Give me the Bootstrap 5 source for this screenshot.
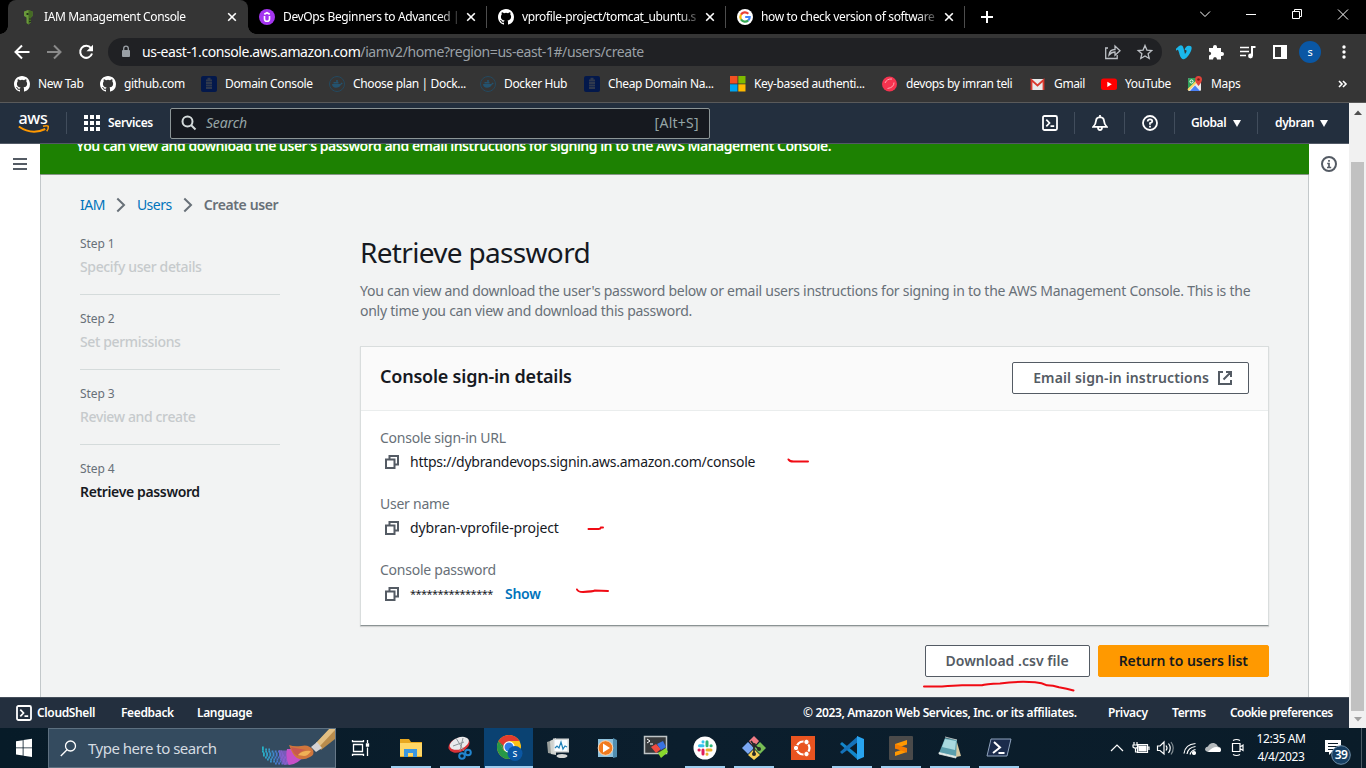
<!DOCTYPE html>
<html lang="en">
<head>
<meta charset="utf-8">
<title>IAM Management Console</title>
<link href="https://cdn.jsdelivr.net/npm/bootstrap@5.3.0/dist/css/bootstrap.min.css" rel="stylesheet">
<style>
body{width:1366px;height:768px;overflow:hidden;font-family:"Noto Sans","Open Sans",sans-serif;font-size:14px;line-height:20px;color:#16191f;background:#000}
svg{display:block;flex:none}
a{text-decoration:none}
.w6{font-weight:600}
/* browser chrome */
.chrome-ui{font-size:12px;letter-spacing:-.36px;color:#fff;line-height:16px;height:102px;background:#353535}
.tabstrip{height:34px;background:#000;padding-left:8px}
.btab{height:34px;position:relative}
.btab.cur{width:240px;background:#353535;border-radius:8px 8px 0 0;padding:0 11px 0 12px}
.btab.cur::before,.btab.cur::after{content:"";position:absolute;bottom:0;width:8px;height:8px}
.btab.cur::before{left:-8px;background:radial-gradient(circle at 0 0,transparent 7.5px,#353535 8px)}
.btab.cur::after{right:-8px;background:radial-gradient(circle at 100% 0,transparent 7.5px,#353535 8px)}
.btab.bg{width:239px;padding:0 10px 0 11px}
.btab.bg{border-right:1px solid transparent;border-image:linear-gradient(transparent 20%,#4d4d4d 20%,#4d4d4d 80%,transparent 80%) 1}
.ttl{white-space:nowrap;width:177px;margin-left:8px;-webkit-mask-image:linear-gradient(90deg,#000 88%,rgba(0,0,0,.15))}
.plus{margin-left:16px}
.winctl{margin-left:auto;margin-right:16px}
.toolbar{height:35px;padding:0 13px}
.omni{width:1054px;height:28px;border-radius:14px;background:#202124;padding:0 9px 0 12px;font-size:14px;letter-spacing:-.42px;margin-left:14px;color:#9aa0a6}
.addr{margin-left:10px}
.exts{margin-left:14px}
.avatar{width:22px;height:22px;border-radius:50%;background:#0a57a4;font-size:11px;margin-left:-1px}
.bmarks{height:30px;padding-left:14px}
.bmarks>span{display:flex;align-items:center;gap:8px;white-space:nowrap;flex:none}
.bmarks>:nth-child(1){width:86px}.bmarks>:nth-child(2){width:101px}.bmarks>:nth-child(3){width:128px}
.bmarks>:nth-child(4){width:151px}.bmarks>:nth-child(5){width:104px}.bmarks>:nth-child(6){width:146px}
.bmarks>:nth-child(7){width:152px}.bmarks>:nth-child(8){width:148px}.bmarks>:nth-child(9){width:71px}
.bmarks>:nth-child(10){width:86px}.bmarks>:nth-child(11){width:150px}
/* console */
.page{height:626px;border-top:1px solid #5a5a5a}
.view{width:1349px;height:625px;background:#fff}
.awsnav{height:41px;background:#232f3e;border-bottom:1px solid #525a66;color:#fff;font-size:12px;letter-spacing:-.36px}
.logo{margin-left:18px}
.vr2{width:1px;height:22px;background:#414d5c;margin-left:16px}
.g17{margin-left:17px}
.sbox{width:540px;height:31px;background:#16191f;border:1px solid #8c9596;border-radius:2px;margin-left:17px;padding:0 10px;color:#95a5a6;font-size:14px;letter-spacing:-.1px}
.sbox i{margin-left:9px}
.sbox .kbd-hint{letter-spacing:.25px}
.navr{width:307px}
.reg{margin-left:16px;width:35px}.usr{margin-left:16px;width:38px}
.car{margin-left:7px}
.mid{height:553px;overflow:hidden}
.side{width:40px;padding-top:12px}
.pane{width:1269px;background:#f2f3f3;border:solid #c3c8ca;border-width:0 1px;position:relative}
.flash{height:31px;margin:0 -1px;background:#1d8102;color:#fff;padding-left:36px;letter-spacing:-.51px;line-height:20px;border-bottom:1px solid #879587;overflow:hidden}
.flash div{margin-top:-8px;white-space:nowrap}
.crumbs{height:20px;margin:20px 0 0 39px;letter-spacing:-.5px;color:#687078}
.crumbs a{color:#0073bb}
.crumbs svg{margin:0 11px}
.crumbs .w6{letter-spacing:-.38px}
.steps{width:200px;margin-left:39px}
.step{height:59px;border-bottom:1px solid #d5dbdb;margin-bottom:16px;color:#c6cacc;font-weight:500;letter-spacing:-.36px}
.step small{display:block;font-size:12px;color:#687078;line-height:16px;padding-bottom:5px;font-weight:400;letter-spacing:-.1px}
.step.now{color:#16191f;font-weight:600;border:0;letter-spacing:-.36px}
.steprow{margin-top:21px}
.mainc{width:909px;margin-left:80px;margin-top:-2px}
.mainc h1{font-size:28px;line-height:36px;margin:0 0 11px;letter-spacing:-.68px;font-weight:400}
.desc{color:#687078;letter-spacing:-.255px;margin:0}
.box{margin-top:25px;background:#fff;border:1px solid #d9dddd;border-bottom-color:#8b9394;height:280px;box-shadow:0 1px 1px #00000022}
.boxh{height:64px;background:#fafafa;border-bottom:1px solid #eaeded;padding:0 19px}
.boxh h2{font-size:18px;font-weight:600;letter-spacing:-.22px;margin:-3px 0 0}
.cbtn{height:32px;border:1px solid #545b64;border-radius:2px;background:#fff;color:#545b64;font-weight:600;padding:0 20px;display:flex;align-items:center;white-space:nowrap;letter-spacing:.02px}
.cbtn.mail{letter-spacing:.14px;margin-top:-2px}
.cbtn.mail svg{margin:0 -4px 0 9px}
.cbtn.main{background:#ff9900;border-color:#ff9900;color:#16191f;letter-spacing:-.01px}
.boxb{padding:17px 19px}
.btns{margin-top:19px}
.field{height:66px;letter-spacing:-.27px}
.field .lab{color:#687078;letter-spacing:-.25px;margin-bottom:4px}
.field svg{margin:0 11px 0 5px}
.uname{letter-spacing:-.09px}
.stars{font-size:11px;letter-spacing:-.55px;width:95px;line-height:20px;padding-bottom:2px;height:20px}
.showl{color:#0073bb}
.ink{position:absolute;left:0;top:0;pointer-events:none}
.foot{height:31px;background:#232f3e;border-top:1px solid #444e5a;color:#fff;font-size:12px;font-weight:600;letter-spacing:-.36px;padding:0 16px}
.f1{width:84px;margin-left:5px}.f2{width:76px}.f3{width:305px}.f4{width:64px}.f5{width:58px}.f6{width:103px;letter-spacing:-.55px}
.sb{width:17px;background:#f1f1f1;padding:7px 2px 6px}
.thumb{height:549px;width:13px;background:#c1c1c1;margin-bottom:6px}
/* taskbar */
.task{height:40px;background:linear-gradient(90deg,#071b28,#0b1e2d 50%,#0a1c29);color:#fff}
.tsearch{width:288px;height:40px;background:#344b5f;border:1px solid #5d7080;border-right-color:#667888;font-size:15px;letter-spacing:-.5px;color:#d5dce2}
.tsearch svg:first-child,.tsearch span{margin-left:11px}
.app{width:49px;height:40px;display:flex;align-items:center;justify-content:center}
.app.run{background:linear-gradient(#9dcdef,#9dcdef) center bottom/40px 2px no-repeat}
.app.act{background:linear-gradient(#9dcdef,#9dcdef) center bottom/48px 2px no-repeat,#0a4272}
.clock{width:64px;text-align:center;font-size:12px;line-height:18px;letter-spacing:-.42px}
</style>
</head>
<body>
<svg width="0" height="0" class="position-absolute">
<defs>
<symbol id="gh" viewBox="0 0 16 16"><path fill="#fff" d="M8 0C3.58 0 0 3.58 0 8c0 3.54 2.29 6.53 5.47 7.59.4.07.55-.17.55-.38 0-.19-.01-.82-.01-1.49-2.01.37-2.53-.49-2.69-.94-.09-.23-.48-.94-.82-1.13-.28-.15-.68-.52-.01-.53.63-.01 1.08.58 1.23.82.72 1.21 1.87.87 2.33.66.07-.52.28-.87.51-1.07-1.78-.2-3.64-.89-3.64-3.95 0-.87.31-1.59.82-2.15-.08-.2-.36-1.02.08-2.12 0 0 .67-.21 2.2.82a7.6 7.6 0 0 1 4 0c1.53-1.04 2.2-.82 2.2-.82.44 1.1.16 1.92.08 2.12.51.56.82 1.27.82 2.15 0 3.07-1.87 3.75-3.65 3.95.29.25.54.73.54 1.48 0 1.07-.01 1.93-.01 2.2 0 .21.15.46.55.38A8 8 0 0 0 16 8c0-4.42-3.58-8-8-8z"/></symbol>
<symbol id="cl" viewBox="0 0 10 10"><path d="M1.2 1.2l7.6 7.6M8.8 1.2L1.2 8.8" stroke="#fff" stroke-width="1.6"/></symbol>
<symbol id="dom" viewBox="0 0 16 16"><rect width="16" height="16" rx="2" fill="#03184b"/><path d="M5 4.500h6M5 7h6M5 9.500h6M5 12h6M6.500 2.700h3" stroke="#30394d" stroke-width="1.800"/></symbol>
<symbol id="dock" viewBox="0 0 16 16"><circle cx="8" cy="8" r="7.500" fill="none" stroke="#24495f"/><path d="M3 8h8.500q.3-1.500 1-1.600.8.800 1.300.9-.5 1.200-1.800 1.200-1.500 3.300-5 3.300Q3.300 11.800 3 8zM4.500 6h5v1.500h-5zM7 4.300h2v1.500H7z" fill="#24536f"/></symbol>
<symbol id="shell" viewBox="0 0 16 16"><rect x="1" y="1" width="14" height="14" rx="1.500" fill="none" stroke="#fff" stroke-width="1.800"/><path d="M4.300 4.700L7.500 8l-3.200 3.300M8.500 11.200h3.700" fill="none" stroke="#fff" stroke-width="1.700"/></symbol>
<symbol id="copy" viewBox="0 0 14 14"><path d="M1 4.500h8.500V13H1zM4.500 4.500V1H13v8.500H9.500" fill="none" stroke="#545b64" stroke-width="2"/></symbol>
<symbol id="chev" viewBox="0 0 10 16"><path d="M1.300 1.500L8 8l-6.700 6.500" fill="none" stroke="#687078" stroke-width="2"/></symbol>
<linearGradient id="gmx" x1="262" x2="296" gradientUnits="userSpaceOnUse"><stop stop-color="#22b9c4"/><stop offset=".5" stop-color="#4a76d0"/><stop offset="1" stop-color="#c94fd0"/></linearGradient>
</defs></svg>

<div class="chrome-ui">
 <div class="tabstrip d-flex align-items-center">
  <div class="btab cur d-flex align-items-center">
   <svg width="16" height="16" viewBox="0 0 16 16"><path d="M4 2.500L8 1l4.500 1.500V7L11 8.500v4.800L8.500 15.500l-2-1.500V8.500L4 7z" fill="#6a9a3a"/><path d="M8.500 1l4 1.500V7L11 8.500v4.800L8.500 15.500z" fill="#456b24"/><path d="M6.500 4h2v2h-2zM9 9.500h2v1H9zM9 12h2v1H9z" fill="#24331a"/></svg>
   <span class="ttl">IAM Management Console</span><svg class="ms-auto" width="10" height="10"><use href="#cl"/></svg></div>
  <div class="btab bg d-flex align-items-center">
   <svg width="16" height="16" viewBox="0 0 16 16"><circle cx="8" cy="8" r="8" fill="#a435f0"/><path d="M5.500 7v3q0 2.300 2.500 2.300t2.500-2.300V7M5.300 5.300L8 3.700l2.700 1.600" fill="none" stroke="#fff" stroke-width="1.600"/></svg>
   <span class="ttl">DevOps Beginners to Advanced |</span><svg class="ms-auto" width="10" height="10"><use href="#cl"/></svg></div>
  <div class="btab bg d-flex align-items-center"><svg width="16" height="16"><use href="#gh"/></svg>
   <span class="ttl">vprofile-project/tomcat_ubuntu.s</span><svg class="ms-auto" width="10" height="10"><use href="#cl"/></svg></div>
  <div class="btab bg d-flex align-items-center">
   <svg width="16" height="16" viewBox="0 0 16 16"><circle cx="8" cy="8" r="8" fill="#fff"/><g fill="none" stroke-width="2.200"><path d="M11.300 4.800A4.700 4.700 0 0 0 4 5.600" stroke="#ea4335"/><path d="M4 5.600a4.700 4.700 0 0 0 0 4.800" stroke="#fbbc05"/><path d="M4 10.400a4.700 4.700 0 0 0 7.200 1" stroke="#34a853"/><path d="M11.200 11.400A4.500 4.500 0 0 0 12.700 8H8.200" stroke="#4285f4"/></g></svg>
   <span class="ttl">how to check version of software</span><svg class="ms-auto" width="10" height="10"><use href="#cl"/></svg></div>
  <svg class="plus" width="12" height="12"><path d="M6 0v12M0 6h12" stroke="#fff" stroke-width="2"/></svg>
  <svg class="winctl" width="150" height="34" viewBox="1200 0 150 34" fill="none" stroke="#fff"><path d="M1200 11.500l5 5 5-5M1246 14.500h10M1292.500 11.500h7v7h-7zM1294.500 11V9.500h7v7h-1.500M1338 9.500l10 10M1348 9.500l-10 10"/></svg>
 </div>
 <div class="toolbar d-flex align-items-center">
  <svg width="81" height="20" fill="none"><path d="M16.500 10H3M9 3.500L2.500 10 9 16.500" stroke="#fff" stroke-width="2"/><path d="M34 10h13M41 3.500l6.500 6.500-6.500 6.500" stroke="#8a8a8a" stroke-width="2"/><path d="M78 6.200A6 6 0 1 0 79 11.500" stroke="#fff" stroke-width="2"/><path d="M80 2.800v6.500h-6.500z" fill="#fff"/></svg>
  <div class="omni d-flex align-items-center">
   <svg width="12" height="14" viewBox="0 0 12 14"><rect x="2" y="5" width="8" height="7" rx="1" fill="#9aa0a6"/><path d="M3.700 5V3.500a2.300 2.300 0 0 1 4.600 0V5" fill="none" stroke="#9aa0a6" stroke-width="1.300"/></svg>
   <span class="addr"><span class="text-white">us-east-1.console.aws.amazon.com</span>/iamv2/home?region=us-east-1#/users/create</span>
   <svg class="ms-auto" width="48" height="18" fill="none" stroke="#bdc1c6" stroke-width="1.300"><path d="M3 5H.7v10.500h11.500V12M4 12q.5-5.500 6-5.500V3l5 4.700-5 4.500V9Q6.500 9 4 12z"/><path d="M40 2.500l1.900 4.600 4.900.4-3.700 3.200 1.100 4.800-4.200-2.600-4.200 2.600 1.100-4.800-3.700-3.200 4.900-.4z"/></svg>
  </div>
  <svg width="124" height="20" viewBox="0 0 124 20" class="exts"><path d="M-1 7.500L3 4Q6.500 2 7.500 6L9 12Q11 10 10.500 8.500 10 7.500 8.500 8.200 9.500 3.500 13 3.700q4 0 2 5.300-3 6.500-6.500 8-3.300 1-4.800-4Q2.200 7 1.500 7.700L0 8.800z" fill="#1ab7ea"/><path d="M33 6h4V5a2 2 0 0 1 4 0v1h4v4h1a2 2 0 0 1 0 4h-1v3.500h-4q0-2.500-2-2.500t-2 2.500h-4v-4q2.200-.3 2.200-2T33 9.500z" fill="#fff"/><path d="M64 5.500h9M64 9.500h9M64 13.500h6" stroke="#fff" stroke-width="1.600"/><path d="M76 14V5h3.500" fill="none" stroke="#fff" stroke-width="2"/><circle cx="74.500" cy="14" r="2.400" fill="#fff"/><path d="M98 4h12v12H98z" fill="none" stroke="#fff" stroke-width="2"/><path d="M105 4h5v12h-5z" fill="#fff"/></svg>
  <span class="avatar d-flex align-items-center justify-content-center">s</span>
  <svg class="ms-auto" width="18" height="16" fill="#fff"><circle cx="9" cy="3" r="1.700"/><circle cx="9" cy="8" r="1.700"/><circle cx="9" cy="13" r="1.700"/></svg>
 </div>
 <div class="bmarks d-flex align-items-center">
  <span><svg width="16" height="16"><use href="#gh"/></svg>New Tab</span>
  <span><svg width="16" height="16"><use href="#gh"/></svg>github.com</span>
  <span><svg width="16" height="16"><use href="#dom"/></svg>Domain Console</span>
  <span><svg width="16" height="16"><use href="#dock"/></svg>Choose plan | Dock...</span>
  <span><svg width="16" height="16"><use href="#dock"/></svg>Docker Hub</span>
  <span><svg width="16" height="16"><use href="#dom"/></svg>Cheap Domain Na...</span>
  <span><svg width="16" height="16"><path fill="#f25022" d="M0 0h7.500v7.500H0z"/><path fill="#7fba00" d="M8.300 0h7.200v7.500H8.300z"/><path fill="#00a4ef" d="M0 8.300h7.500v7.200H0z"/><path fill="#ffb900" d="M8.300 8.300h7.200v7.200H8.300z"/></svg>Key-based authenti...</span>
  <span><svg width="16" height="16"><circle cx="7.500" cy="8" r="7.500" fill="#f5334f"/><path d="M3 7q2-4.500 7-4M12 6.500q0 5-6.500 6" stroke="#ffa6b0" fill="none"/></svg>devops by imran teli</span>
  <span><svg width="16" height="16"><path d="M1 3h13v11H1z" fill="#e8eaea"/><path d="M1.500 14V4l6 5.500 6-5.500v10" fill="none" stroke="#d93a2f" stroke-width="1.800"/></svg>Gmail</span>
  <span><svg width="16" height="16"><rect y="2.500" width="16" height="11.500" rx="2.500" fill="#f00"/><path d="M6.300 5.700l4.500 2.600-4.500 2.600z" fill="#fff"/></svg>YouTube</span>
  <span><svg width="16" height="16"><rect x="1" y="2" width="13" height="13" rx="1.500" fill="#e8e8e8"/><path d="M1 3.500Q1 2 2.500 2H9v4L1 13z" fill="#2f9f5a"/><path d="M3 15l5-5.500L13 15z" fill="#4a80f5"/><path d="M1 14L10 5" stroke="#fdd663" stroke-width="1.800"/><circle cx="4.500" cy="5.500" r="1.600" fill="none" stroke="#fff"/><path d="M11.500 0A3.500 3.500 0 0 1 15 3.500Q15 6 11.500 10 8 6 8 3.500A3.500 3.500 0 0 1 11.500 0z" fill="#e0443a"/><circle cx="11.500" cy="3.500" r="1.300" fill="#7d1b16"/></svg>Maps</span>
  <svg width="14" height="10" fill="none" stroke="#fff" stroke-width="1.600"><path d="M2 2l3 3-3 3M6 2l3 3-3 3"/></svg>
 </div>
</div>

<div class="page d-flex">
 <div class="view">
  <nav class="awsnav d-flex align-items-center w6">
   <svg class="logo" width="32" height="24" viewBox="0 0 32 24"><text x="0.500" y="12.500" font-size="17" font-weight="500" fill="#fff" textLength="29" lengthAdjust="spacingAndGlyphs">aws</text><path d="M.8 15.500q13 9 26.500 2.500" fill="none" stroke="#ff9900" stroke-width="2"/><path d="M25 15.300q4-1.300 5.300 0 .3 2.500-1.600 5" fill="none" stroke="#ff9900" stroke-width="1.500"/></svg>
   <span class="vr2"></span>
   <svg class="g17" width="16" height="16" fill="#fff"><path d="M0 0h4v4H0zM6 0h4v4H6zM12 0h4v4h-4zM0 6h4v4H0zM6 6h4v4H6zM12 6h4v4h-4zM0 12h4v4H0zM6 12h4v4H6zM12 12h4v4h-4z"/></svg>
   <span class="ms-2">Services</span>
   <div class="sbox d-flex align-items-center fw-normal"><svg width="16" height="16" fill="none" stroke="#d5dbdb" stroke-width="2"><circle cx="6.500" cy="6.500" r="5"/><path d="M10 10l4.500 4.500"/></svg><i>Search</i><span class="ms-auto kbd-hint">[Alt+S]</span></div>
   <div class="ms-auto navr d-flex align-items-center">
    <svg width="16" height="16"><use href="#shell"/></svg><span class="vr2"></span>
    <svg class="g17" width="16" height="18" viewBox="0 0 16 18" fill="none" stroke="#fff" stroke-width="1.800"><path d="M1.200 12.800Q3.800 10.500 4 6.800 4.300 3.500 8 3.200q3.700.3 4 3.600.2 3.700 2.800 6zM8 3.200V1M6 13.500q0 2.500 2 2.500t2-2.500"/></svg><span class="vr2"></span>
    <svg class="g17" width="16" height="16" fill="none" stroke="#fff" stroke-width="1.800"><circle cx="8" cy="8" r="7"/><path d="M5.700 6.500Q5.700 4.300 8 4.300t2.300 2Q10.300 7.700 8 8.200V9.700M8 10.800v1.700"/></svg><span class="vr2"></span>
    <span class="reg">Global</span><svg class="car" width="8" height="7" fill="#fff"><path d="M0 0h8L4 7z"/></svg>
    <span class="vr2 ms-3 ps-0"></span><span class="vr2 invisible m-0"></span><span class="usr">dybran</span><svg class="car" width="8" height="7" fill="#fff"><path d="M0 0h8L4 7z"/></svg>
   </div>
  </nav>
  <div class="mid d-flex">
   <div class="side"><svg class="mx-auto mt-0" width="14" height="16"><path d="M0 3h14M0 8h14M0 13h14" stroke="#545b64" stroke-width="2"/></svg></div>
   <div class="pane">
    <div class="flash w6"><div>You can view and download the user's password and email instructions for signing in to the AWS Management Console.</div></div>
    <div class="crumbs d-flex align-items-center"><a href="#">IAM</a><svg width="10" height="16"><use href="#chev"/></svg><a href="#">Users</a><svg width="10" height="16"><use href="#chev"/></svg><span class="w6">Create user</span></div>
    <div class="d-flex steprow">
     <div class="steps">
      <div class="step"><small>Step 1</small>Specify user details</div>
      <div class="step"><small>Step 2</small>Set permissions</div>
      <div class="step"><small>Step 3</small>Review and create</div>
      <div class="step now"><small>Step 4</small>Retrieve password</div>
     </div>
     <div class="mainc">
      <h1>Retrieve password</h1>
      <p class="desc">You can view and download the user's password below or email users instructions for signing in to the AWS Management Console. This is the<br>only time you can view and download this password.</p>
      <div class="box">
       <div class="boxh d-flex align-items-center justify-content-between"><h2>Console sign-in details</h2>
        <button class="cbtn mail">Email sign-in instructions<svg width="14" height="14" fill="none" stroke="#545b64" stroke-width="2"><path d="M5 1H1v12h12V9M8 1h5v5M13 1L5.500 8.500"/></svg></button></div>
       <div class="boxb">
        <div class="field"><div class="lab">Console sign-in URL</div><div class="d-flex align-items-center"><svg width="14" height="14"><use href="#copy"/></svg>https://dybrandevops.signin.aws.amazon.com/console</div></div>
        <div class="field"><div class="lab">User name</div><div class="d-flex align-items-center"><svg width="14" height="14"><use href="#copy"/></svg><span class="uname">dybran-vprofile-project</span></div></div>
        <div class="field"><div class="lab">Console password</div><div class="d-flex align-items-center"><svg width="14" height="14"><use href="#copy"/></svg><span class="stars">***************</span><a href="#" class="w6 showl">Show</a></div></div>
       </div>
      </div>
      <div class="d-flex justify-content-end gap-2 btns"><button class="cbtn">Download .csv file</button><button class="cbtn main">Return to users list</button></div>
     </div>
    </div>
    <svg class="ink" width="1267" height="553" viewBox="41 144 1267 553" fill="none" stroke="#f00b14" stroke-width="2" stroke-linecap="round"><path d="M788.500 459.500q1 2 5 2l14.500 0M588.500 529h10q2 0 2.500-1.500h2M577 589.500q1 2.500 6 2.500 10-.5 12-1.500l13 .5M924 686.500h18q12-1 20-1.300h20q3-1 18-1.700 18-2.500 35-1.200 7 .5 12 3 6 0 12 2 8 1.200 14.500 3.200"/></svg>
   </div>
   <div class="side"><svg class="mx-auto" width="16" height="16" fill="none" stroke="#545b64" stroke-width="2"><circle cx="8" cy="8" r="7"/><path d="M8 4v1.700M6.200 7.500H8v4M6 11.500h4.200" stroke-width="1.700"/></svg></div>
  </div>
  <footer class="foot d-flex align-items-center">
   <svg width="16" height="16"><use href="#shell"/></svg><span class="f1">CloudShell</span><span class="f2">Feedback</span><span>Language</span>
   <span class="ms-auto text-nowrap f3">© 2023, Amazon Web Services, Inc. or its affiliates.</span><span class="f4">Privacy</span><span class="f5">Terms</span><span class="text-nowrap f6">Cookie preferences</span>
  </footer>
 </div>
 <div class="sb d-flex flex-column align-items-center"><svg width="8" height="5"><path d="M0 5l4-4.500L8 5z" fill="#505050"/></svg><div class="thumb mt-auto"></div><svg width="8" height="5"><path d="M0 0h8L4 4.500z" fill="#a0a0a0"/></svg></div>
</div>

<div class="task d-flex align-items-center">
 <svg width="48" height="40" fill="#fff"><path d="M16 13.200l6.700-1v7.300H16zM23.500 12l8.500-1.300v8.800h-8.500zM16 20.300h6.700v7.300l-6.700-1zM23.500 20.300H32V29l-8.500-1.200z"/></svg>
 <div class="tsearch d-flex align-items-center">
  <svg width="17" height="17" fill="none" stroke="#fff" stroke-width="1.300"><circle cx="10.500" cy="6" r="5"/><path d="M7 9.700L.8 16"/></svg><span>Type here to search</span>
  <svg class="ms-auto" width="76" height="38" viewBox="260 729 76 38"><g fill="none" stroke="url(#gmx)" stroke-width="1.800" stroke-dasharray="1.800 1.400"><path d="M263 747.500h3M263 749.500h8"/><path d="M263 751.500h20M264 753.500h20M264 755.500h21M266 757.500h22M268 759.500h21"/><path d="M271 761.500h20M276 763.500h14" /></g><path d="M280 750q6 1 12 0l11 9q-6 5-18 6-5-6-5-15z" fill="#8a5fd0" opacity=".8"/><path d="M288 749h6l8 10q-4 5-12 6-4-7-2-16z" fill="#c650c8"/><path d="M317 743l15-15h4v11l-14 11z" fill="#b98c4c"/><path d="M317 743l14-15h5v2l-15 16z" fill="#e3c083"/><path d="M312 747l6-5 5 6-6 4z" fill="#d5d3d4"/><path d="M290 745q5 2 12 1 8-2 12 4 2 5-3 7-7 4-13 1-4-2-8-13z" fill="#d0763c"/><path d="M292 747q9 2 15 3-7 1-8 6-5-2-7-9z" fill="#c8584f"/><path d="M299 755q5-5 13-4-3 5-7 5z" fill="#f0b056"/></svg>
 </div>
 <svg width="50" height="40" fill="none" stroke="#fff" stroke-width="1.300"><path d="M17.500 16.500h9v7h-9zM16.500 12v1.500h11V12M16.500 28v-1.500h11V28M31.500 12v3M31.500 19.500V28"/><path d="M30.500 16h2v2h-2z" fill="#fff"/></svg>
 <div class="app run"><svg width="24" height="20"><path d="M1 1h9l2 3h11v15H1z" fill="#e8a820"/><path d="M1 5h22v13H1z" fill="#ffd766"/><path d="M5 19v-8h13v8h-4v-4H9v4z" fill="#3b97e0"/></svg></div>
 <div class="app run"><svg width="26" height="26"><ellipse cx="12" cy="10" rx="11" ry="7" fill="#d93237" transform="rotate(-22 12 10)"/><ellipse cx="12.500" cy="8.500" rx="10" ry="5.700" fill="#e9eaec" transform="rotate(-22 12 9)"/><path d="M9 3l8 13M16 3l-3 13M6 11l11-4" stroke="#8c9398"/><circle cx="15" cy="21" r="2.800" fill="none" stroke="#2285ce" stroke-width="2"/><circle cx="21" cy="17.500" r="2.800" fill="none" stroke="#2285ce" stroke-width="2"/></svg></div>
 <div class="app act"><svg width="28" height="28" viewBox="0 0 28 28"><circle cx="14" cy="13" r="12" fill="#fbc116"/><path d="M3.600 7a12 12 0 0 1 20.800 0H14z" fill="#e33b2e"/><path d="M3.600 7A12 12 0 0 0 14 25l5-8.500-10.200 0z" fill="#279847"/><path d="M3.600 7L9 16l5-9z" fill="#e33b2e"/><path d="M3.600 7L9 16.500l-1-5z" fill="#279847"/><circle cx="14" cy="13" r="5.700" fill="#fff"/><circle cx="14" cy="13" r="4.500" fill="#2e7be5"/><circle cx="20" cy="19.500" r="7.500" fill="#0a57a4"/><text x="20" y="23" font-size="10" text-anchor="middle" fill="#fff">s</text></svg></div>
 <div class="app"><svg width="24" height="22"><path d="M1 5l6-2v14l-5-1z" fill="#9a9f9c"/><path d="M4 4l6-3v17l-5-1z" fill="#cfd2ce"/><rect x="7" y="1.500" width="16" height="14" fill="#d5d8d7"/><rect x="8.500" y="3" width="13" height="11" fill="#f8fcff"/><path d="M9 11l2-2 2 2 2-6 2 7 2-3 2 1" fill="none" stroke="#1e80b8" stroke-width="1.200"/><ellipse cx="16" cy="19" rx="5.500" ry="2" fill="#d6d8d7"/></svg></div>
 <div class="app"><svg width="22" height="22"><path d="M2 2h17v18H2z" fill="#8fc2dd"/><path d="M17 1l4 2v17l-4 1z" fill="#518eb0"/><circle cx="9.500" cy="11" r="7.300" fill="#f17a1d" stroke="#fbd9b8"/><path d="M7 6.500v9l7-4.500z" fill="#fff"/></svg></div>
 <div class="app"><svg width="26" height="26" class="mb-1"><rect x="1.500" y="3.500" width="22" height="17" fill="#373a3c" stroke="#bfc5c7" stroke-width="1.500"/><path d="M4 6l3 2-3 2M7 11h3" stroke="#fff" fill="none"/><path d="M8 14l5-3 5 5-5 4z" fill="#f04b41"/><path d="M14 11l6-3 3 6-5 3z" fill="#3972e0"/><path d="M15 20l8-5 2 4-7 6z" fill="#88d82d"/></svg></div>
 <div class="app run"><svg width="24" height="24" stroke-width="3" stroke-linecap="round"><circle cx="12" cy="12" r="11.500" fill="#fff"/><path d="M6.500 9.800h3.500M10 5.800v.2" stroke="#36c5f0"/><path d="M14 5.800v4M18 9.800h.2" stroke="#2eb67d"/><path d="M14 14h4M14 18v.2" stroke="#ecb22e"/><path d="M10 14v4M6 14h.2" stroke="#e01e5a"/></svg></div>
 <div class="app run"><svg width="24" height="24"><path d="M12 0l5 5-5 6-5-6z" fill="#ef7b84"/><path d="M6 6l6 6-6 6-6-6z" fill="#7ba7f3"/><path d="M18 6l6 6-6 6-6-6z" fill="#77bd55"/><path d="M12 13l6 6-6 5-6-5z" fill="#f8cf55"/><path d="M9 5l3 4v10M12 9l5 4" fill="none" stroke="#26292b" stroke-width="1.700"/><circle cx="12" cy="9" r="2" fill="#26292b"/><circle cx="17" cy="13" r="2" fill="#26292b"/><circle cx="12" cy="18" r="2" fill="#26292b"/></svg></div>
 <div class="app"><svg width="24" height="24"><path fill="#e95420" d="M0 0h24v24H0z"/><circle cx="12" cy="12" r="6.500" fill="none" stroke="#fff" stroke-width="2.200"/><g fill="#fff" stroke="#e95420"><circle cx="5" cy="12" r="2.700"/><circle cx="15.500" cy="6" r="2.700"/><circle cx="15.500" cy="18" r="2.700"/></g></svg></div>
 <div class="app run"><svg width="24" height="24"><path d="M0 8l2-2 16 13v5z" fill="#1286ca"/><path d="M0 16l2 2L18 6V0z" fill="#1572ba"/><path d="M17 0l7 3v18l-7 3z" fill="#28a4f0"/></svg></div>
 <div class="app run"><svg width="24" height="24"><rect width="24" height="24" rx="1" fill="#4a4a4a"/><path d="M6 8l12-4v4.500L6 12.500zM6 16l12-4v4L6 20z" fill="#ff9800"/><path d="M6 8v4.500l12 4v-4.500z" fill="#f57c00"/></svg></div>
 <div class="app run"><svg width="24" height="24"><path d="M18 3l5 17-5 1z" fill="#d5c7a0"/><path d="M7 2l12 2-1 17L1 17z" fill="#5b9eac"/><path d="M7 3l11 2-1 9L4 11z" fill="#a9d9df"/><path d="M1 16.500l17 4v1.500L1 18zM7 1l12 3" stroke="#dfe9e6" stroke-width=".8" fill="#eef2ee"/></svg></div>
 <div class="app run"><svg width="26" height="20"><path d="M5 1h20l-4 17H1z" fill="#1b2c4c" stroke="#8fa3bd"/><path d="M8 4l6 5.500L7 15M12.500 15h6" fill="none" stroke="#fff" stroke-width="2"/></svg></div>
 <svg class="ms-auto" width="141" height="40" viewBox="1108 728 141 40" fill="none" stroke="#fff" stroke-width="1.200"><path d="M1111 751l6-6 6 6"/><path d="M1137.500 744.500h10v8h-10zM1148 747h1v3"/><path d="M1139 746h7v5h-7z" fill="#fff"/><path d="M1134 742v3M1137 742v3M1133 745h5v2q-2.500 2.500-5 0zM1135.500 749v3h3"/><path d="M1157.500 746v4.500h2.500l4 3.500v-12l-4 4zM1166 745.500q2 2.500 0 5M1168.500 743.500q3.500 4.500 0 9.500"/><path d="M1171 742q4.500 6 0 12.500" stroke="#7f8a90"/><path d="M1184 753.500q1-9 11.500-10M1187 754q1-6.500 8.500-7.500M1190 754.500q1-4 5.500-5" /><circle cx="1194" cy="753" r="1.500" fill="#fff"/><path d="M1209 752q-4-.5-4-3 .5-2.500 3-2.500 1.500-4 6-3.500 3 .5 4 3.500 3 .5 3 3 0 2.500-3 2.500z" fill="#b5babd" stroke="none"/><path d="M1208 752q6-7 12-4 2 2 0 4z" fill="#fff" stroke="none"/><path d="M1232.500 743.500h7.500v8h-7.500zM1240 747l3-2v5.500l-3-2M1233 740.500q3.500-2 7 0M1233 754.500q3.500 2 7 0"/></svg>
 <div class="clock">12:35 AM<br>4/4/2023</div>
 <svg width="53" height="40" viewBox="1313 728 53 40"><path d="M1325 740h16v12h-9l-3 3v-3h-4z" fill="#fff"/><path d="M1328 743.500h10M1328 746.500h10M1328 749.500h6" stroke="#0a1c29"/><circle cx="1341" cy="755" r="9.300" fill="#173f63" stroke="#6f8ea8"/><text x="1341" y="759.300" font-size="12" font-weight="600" text-anchor="middle" fill="#fff" letter-spacing="-.5">39</text><path d="M1361.500 728v40" stroke="#4b5a64"/></svg>
</div>
<script src="https://cdn.jsdelivr.net/npm/bootstrap@5.3.0/dist/js/bootstrap.bundle.min.js"></script>
</body>
</html>
